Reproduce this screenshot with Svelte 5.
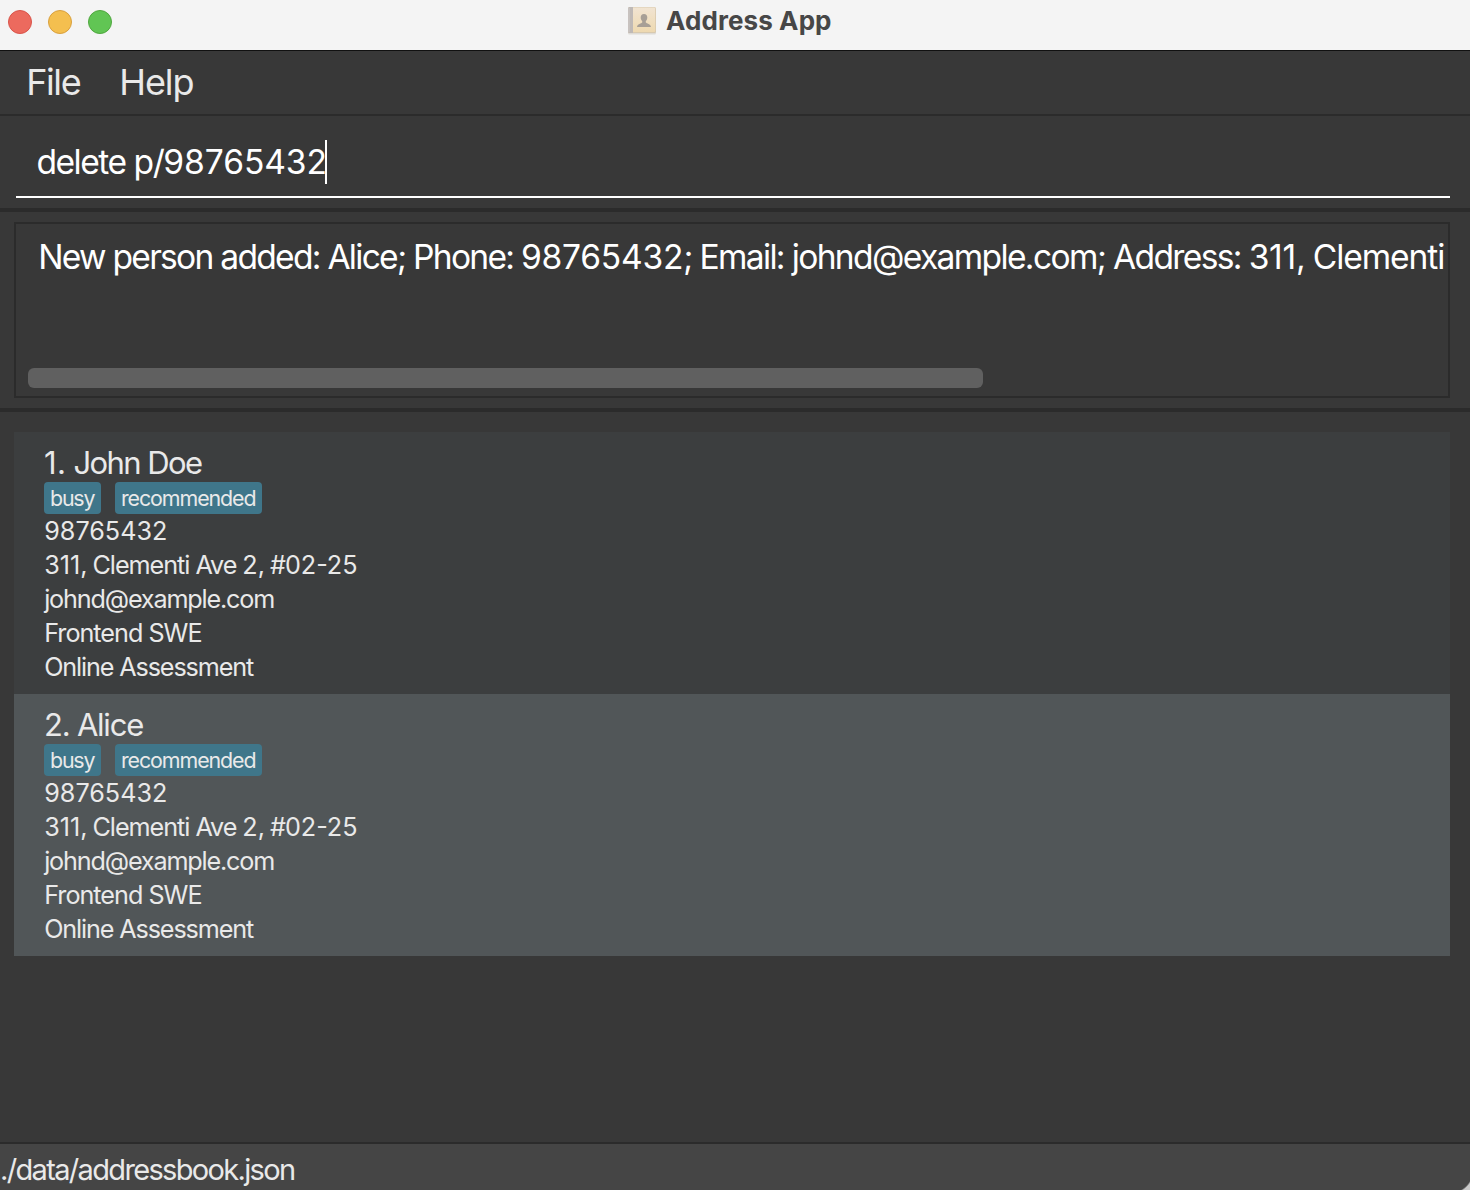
<script>
  const lights = ['close', 'minimize', 'zoom'];

  const message = [
    { text: 'New person added: Alice; Phone: ' },
    { text: '98765432', digits: true },
    { text: '; Email: johnd@example.com; Address: ' },
    { text: '311', digits: true },
    { text: ', Clementi', loose: true }
  ];

  const address = [
    { text: '311', digits: true },
    { text: ', Clementi Ave ' },
    { text: '2', digits: true },
    { text: ', #' },
    { text: '02-25', digits: true }
  ];

  const persons = ['John Doe', 'Alice'].map((name, i) => ({
    name,
    index: i + 1,
    tags: ['busy', 'recommended'],
    phone: '98765432',
    address,
    email: 'johnd@example.com',
    role: 'Frontend SWE',
    stage: 'Online Assessment'
  }));
</script>

{#snippet runs(parts)}{#each parts as part}<span class:digits={part.digits} class:loose={part.loose}>{part.text}</span>{/each}{/snippet}

<div class="window">
  <header class="titlebar">
    <div class="lights">
      {#each lights as light}<span class="light {light}"></span>{/each}
    </div>
    <div class="title">
      <svg class="book" width="30" height="30" viewBox="0 0 30 30">
        <defs>
          <linearGradient id="cover" x1="0" y1="0" x2="0" y2="1">
            <stop offset="0" stop-color="#f1e4d2" />
            <stop offset="1" stop-color="#eed9b0" />
          </linearGradient>
        </defs>
        <rect x="1" y="2.4" width="28" height="26" rx="1.5" fill="#dedbd6" />
        <rect x="1" y="1" width="28" height="26" rx="1.5" fill="#d8c9ae" />
        <rect x="5" y="1.6" width="23.2" height="24.4" rx="1" fill="url(#cover)" />
        <path d="M2.5 1H6v26H2.5A1.5 1.5 0 0 1 1 25.500v-23A1.500 1.500 0 0 1 2.500 1z" fill="#bfb9b6" />
        <path d="M2 2v24" stroke="#d0cbc8" stroke-width="1" />
        <path d="M17 8c-2.200 0-3.400 1.600-3.300 3.700.1 1.500.7 2.500 1.500 3.300v1.400c-.7 1-4.900 1.200-5.200 4.600h14c-.3-3.400-4.500-3.600-5.200-4.600V15c.8-.8 1.400-1.800 1.500-3.300C20.400 9.600 19.200 8 17 8z" fill="#a79f96" />
      </svg>
      <span>Address App</span>
    </div>
  </header>

  <nav class="menu">
    <span class="file">File</span>
    <span class="help">Help</span>
  </nav>

  <section class="command">
    <div class="field"><span class="typed">delete p/<span class="digits">98765432</span></span><span class="caret"></span></div>
  </section>

  <section class="result">
    <div class="box">
      <div class="message">{@render runs(message)}</div>
      <div class="thumb"></div>
    </div>
  </section>

  <main class="list">
    {#each persons as p}
      <article class="cell" class:even={p.index % 2 === 0}>
        <h2><span class="index">{p.index}.</span> {p.name}</h2>
        <div class="tags">
          {#each p.tags as tag}<span class="tag {tag}">{tag}</span>{/each}
        </div>
        <p><span class="digits">{p.phone}</span></p>
        <p class="address">{@render runs(p.address)}</p>
        <p class="email">{p.email}</p>
        <p class="role">{p.role}</p>
        <p>{p.stage}</p>
      </article>
    {/each}
  </main>

  <footer class="status">./data/addressbook.json</footer>
  <span class="corner"></span>
</div>

<style>
  :global(body) {
    background: #383838;
  }
  .window {
    position: relative;
    display: flex;
    flex-direction: column;
    box-sizing: border-box;
    width: 1470px;
    height: 1190px;
    overflow: hidden;
    background: #383838;
    color: #e9e9e9;
    font-family: Inter, 'Liberation Sans', sans-serif;
    white-space: nowrap;
  }
  .digits {
    letter-spacing: 0;
  }

  .titlebar {
    display: grid;
    grid-template-columns: 620px 1fr;
    height: 50px;
    background: #f4f4f4;
    border-bottom: 1px solid #111;
  }
  .lights {
    display: flex;
    gap: 16px;
    padding: 10px 8px;
  }
  .light {
    box-sizing: border-box;
    width: 24px;
    height: 24px;
    border-radius: 50%;
  }
  .close {
    background: #ec6a5e;
    border: 1px solid #d9544a;
  }
  .minimize {
    background: #f4bf4f;
    border: 1px solid #d9a03e;
  }
  .zoom {
    background: #61c554;
    border: 1px solid #50a73f;
  }
  .title {
    display: flex;
    align-items: flex-start;
    gap: 9px;
    padding: 6px 0 0 7px;
    color: #474747;
    font-size: 26px;
    font-weight: 700;
    line-height: 30px;
    letter-spacing: 0.1px;
  }

  .menu {
    display: flex;
    height: 63px;
    padding-left: 26.2px;
    border-bottom: 2px solid #2b2b2b;
    font-size: 36px;
    line-height: 62px;
  }
  .file {
    width: 93px;
    letter-spacing: -1.4px;
  }
  .help {
    letter-spacing: -1.05px;
  }

  .command {
    box-sizing: border-box;
    height: 96px;
    padding: 14px 20px 0 16px;
    border-bottom: 4px solid #2b2b2b;
  }
  .field {
    display: flex;
    align-items: flex-start;
    height: 66px;
    padding-left: 20.4px;
    border-bottom: 2px solid #fff;
    color: #fff;
    font-size: 33.6px;
    line-height: 64px;
    letter-spacing: -1.48px;
  }
  .field .digits {
    letter-spacing: -0.07px;
  }
  .caret {
    width: 2px;
    height: 44px;
    margin: 10px 0 0 -2px;
    background: #fff;
  }

  .result {
    box-sizing: border-box;
    height: 200px;
    padding: 10px 20px 0 14px;
    border-bottom: 4px solid #2b2b2b;
  }
  .box {
    box-sizing: border-box;
    height: 176px;
    padding: 11px 0 0 12px;
    overflow: hidden;
    border: 2px solid #2b2b2b;
  }
  .message {
    height: 133px;
    padding-left: 10.2px;
    color: #fff;
    font-size: 33.6px;
    line-height: 44px;
    letter-spacing: -1.73px;
  }
  .message .digits {
    letter-spacing: -0.25px;
  }
  .message .digits + span {
    letter-spacing: -1.65px;
  }
  .message .digits + .loose {
    letter-spacing: -1.1px;
  }
  .thumb {
    width: 955px;
    height: 20px;
    border-radius: 6px;
    background: #606060;
  }

  .list {
    flex: 1;
    padding: 20px 20px 0 14px;
  }
  .cell {
    box-sizing: border-box;
    height: 262px;
    padding: 12px 0 0 30px;
    background: #3c3e3f;
    font-size: 25.2px;
    letter-spacing: -1.13px;
  }
  .even {
    background: #515658;
  }
  h2 {
    margin: 0;
    font-size: 31px;
    font-weight: 400;
    line-height: 38px;
    letter-spacing: -1.22px;
  }
  .cell:first-child h2 {
    letter-spacing: -1.56px;
  }
  .cell:first-child .index {
    letter-spacing: 0.35px;
  }
  .tags {
    display: flex;
    gap: 14px;
    font-size: 21.4px;
    line-height: 32px;
  }
  .tag {
    box-sizing: border-box;
    padding-left: 6px;
    border-radius: 4px;
    background: #3f768a;
  }
  .busy {
    width: 57px;
    letter-spacing: -1.2px;
  }
  .recommended {
    width: 147px;
    letter-spacing: -1.09px;
  }
  p {
    margin: 0;
    padding-left: 0.2px;
    line-height: 34px;
  }
  .address {
    letter-spacing: -1.04px;
  }
  .email {
    letter-spacing: -1.17px;
  }
  .role {
    letter-spacing: -1px;
  }

  .status {
    box-sizing: border-box;
    height: 48px;
    border-top: 2px solid #2b2b2b;
    background: #454545;
    font-size: 29px;
    line-height: 51px;
    letter-spacing: -1.66px;
  }
  .corner {
    position: absolute;
    right: 0;
    bottom: 0;
    width: 20px;
    height: 20px;
    background: radial-gradient(circle at 0 0, transparent 22.500px, #c9c9c9 24px);
  }
</style>
